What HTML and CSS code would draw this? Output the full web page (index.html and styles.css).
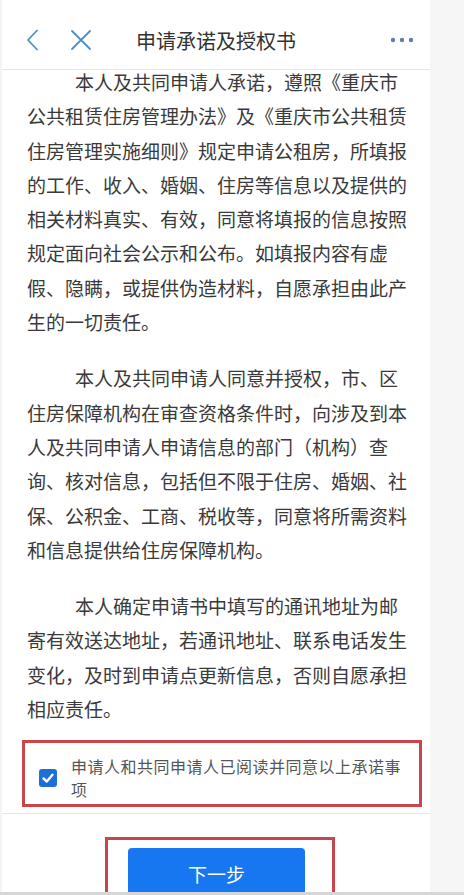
FILE: index.html
```html
<!DOCTYPE html>
<html lang="zh-CN">
<head>
<meta charset="utf-8">
<title>申请承诺及授权书</title>
<link rel="stylesheet" href="styles.css">
</head>
<body>
<div class="page">
  <div class="panel">
    <header class="topbar">
      <div class="nav-left">
        <svg class="icon-back" width="14" height="22" viewBox="0 0 14 22"><polyline points="11,1.5 2,11 11,20.5" fill="none" stroke="#4b8ec9" stroke-width="1.8" stroke-linecap="round" stroke-linejoin="round"/></svg>
        <svg class="icon-close" width="22" height="22" viewBox="0 0 22 22"><path d="M2 2 L20 20 M20 2 L2 20" fill="none" stroke="#4b8ec9" stroke-width="1.8" stroke-linecap="round"/></svg>
      </div>
      <h1 class="title">申请承诺及授权书</h1>
      <div class="nav-right">
        <svg width="24" height="6" viewBox="0 0 24 6"><circle cx="3" cy="3" r="2.2" fill="#5b7fa6"/><circle cx="12" cy="3" r="2.2" fill="#5b7fa6"/><circle cx="21" cy="3" r="2.2" fill="#5b7fa6"/></svg>
      </div>
    </header>
    <main class="card">
      <p class="para first">本人及共同申请人承诺，遵照《重庆市公共租赁住房管理办法》及《重庆市公共租赁住房管理实施细则》规定申请公租房，所填报的工作、收入、婚姻、住房等信息以及提供的相关材料真实、有效，同意将填报的信息按照规定面向社会公示和公布。如填报内容有虚假、隐瞒，或提供伪造材料，自愿承担由此产生的一切责任。</p>
      <p class="para">本人及共同申请人同意并授权，市、区住房保障机构在审查资格条件时，向涉及到本人及共同申请人申请信息的部门（机构）查询、核对信息，包括但不限于住房、婚姻、社保、公积金、工商、税收等，同意将所需资料和信息提供给住房保障机构。</p>
      <p class="para">本人确定申请书中填写的通讯地址为邮寄有效送达地址，若通讯地址、联系电话发生变化，及时到申请点更新信息，否则自愿承担相应责任。</p>
      <label class="agree">
        <span class="checkbox">
          <svg width="18" height="18" viewBox="0 0 18 18"><polyline points="4.5,9.5 7.8,12.5 13.5,5.8" fill="none" stroke="#fff" stroke-width="2.4" stroke-linecap="round" stroke-linejoin="round"/></svg>
        </span>
        <span class="agree-text">申请人和共同申请人已阅读并同意以上承诺事项</span>
      </label>
    </main>
    <footer class="footer">
      <div class="btn-frame">
        <button class="btn-next" type="button">下一步</button>
      </div>
    </footer>
  </div>
  <div class="side"></div>
</div>
<div class="bottom-bar"></div>
</body>
</html>
```
FILE: styles.css
```css
* { box-sizing: border-box; }
html, body {
  margin: 0;
  padding: 0;
  width: 464px;
  height: 895px;
  overflow: hidden;
  background: #f4f4f4;
  font-family: "Noto Sans CJK SC", "Noto Sans", sans-serif;
}
.page {
  display: flex;
  height: 892px;
}
.panel {
  width: 428px;
  margin-left: 2px;
  background: #fff;
  display: flex;
  flex-direction: column;
  height: 892px;
}
.side {
  flex: 1;
  background: #f6f6f6;
}
.topbar {
  height: 70px;
  padding-top: 11px;
  border-bottom: 1px solid #e6e6e6;
  display: flex;
  align-items: center;
  position: relative;
  z-index: 1;
  background: #fff;
}
.nav-left {
  display: flex;
  align-items: center;
  padding-left: 24px;
  gap: 30px;
  width: 120px;
}
.title {
  flex: 1;
  margin: 0;
  text-align: center;
  font-size: 20px;
  font-weight: normal;
  color: #333;
}
.nav-right {
  width: 120px;
  display: flex;
  justify-content: flex-end;
  padding-right: 16px;
}
.card {
  padding: 0 21px 6px 25px;
  border-bottom: 1px solid #e8e8e8;
}
.para {
  margin: 22px 0 0 0;
  font-size: 19px;
  line-height: 34.3px;
  color: #3a3a3a;
  text-indent: 48px;
  word-break: break-all;
  line-break: strict;
}
.para.first {
  margin-top: -5px;
  position: relative;
  z-index: 2;
}
.agree {
  margin: 14px 0 0 -5px;
  width: 400px;
  height: 67px;
  border: 3px solid #c8464a;
  display: flex;
  align-items: center;
  padding: 8px 6px 0 14px;
  gap: 14px;
}
.checkbox {
  width: 18px;
  height: 18px;
  flex: none;
  background: #1b6fd6;
  border-radius: 3px;
  display: flex;
}
.agree-text {
  font-size: 16px;
  letter-spacing: 0.5px;
  line-height: 23px;
  color: #555;
}
.footer {
  flex: 1;
  overflow: hidden;
  padding-top: 23px;
}
.btn-frame {
  margin-left: 103px;
  width: 230px;
  height: 70px;
  border: 3px solid #c8464a;
  padding: 8px 27px 0 20px;
}
.btn-next {
  display: block;
  width: 177px;
  height: 60px;
  border: none;
  border-radius: 4px 4px 0 0;
  background: #1677f0;
  color: #fff;
  font-family: "Noto Sans CJK SC", "Noto Sans", sans-serif;
  font-size: 19px;
  padding: 0 0 10px 0;
  line-height: 1;
}
.bottom-bar {
  height: 3px;
  background: #d6d6d6;
}
```
